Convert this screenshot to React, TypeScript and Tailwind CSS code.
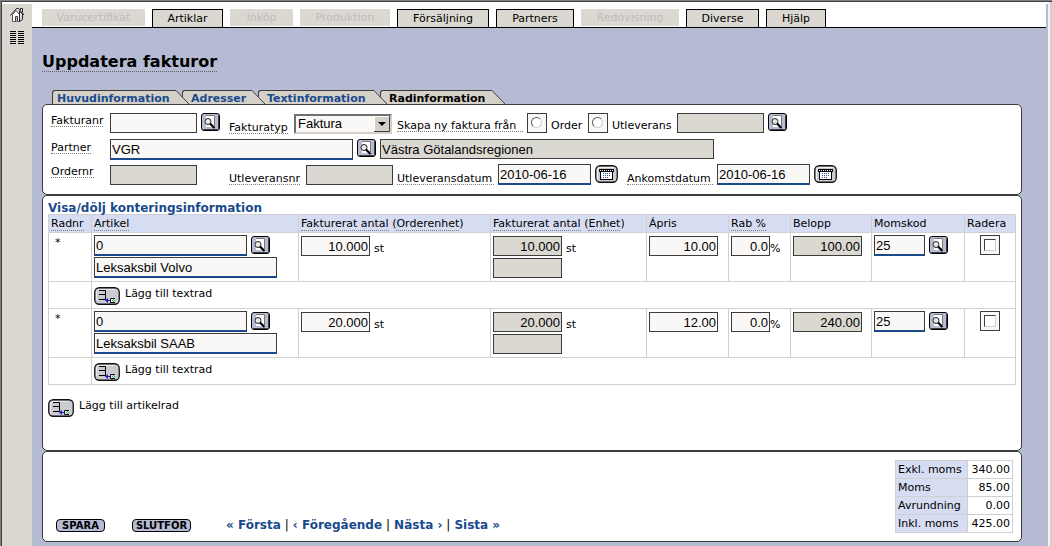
import type { ReactNode } from "react";

const menu = [
  { label: "Varucertifikat", disabled: true, width: "w-[103px]" },
  { label: "Artiklar", disabled: false, width: "w-[71px]" },
  { label: "Inköp", disabled: true, width: "w-[63px]" },
  { label: "Produktion", disabled: true, width: "w-[90px]" },
  { label: "Försäljning", disabled: false, width: "w-[92px]" },
  { label: "Partners", disabled: false, width: "w-[78px]" },
  { label: "Redovisning", disabled: true, width: "w-[98px]" },
  { label: "Diverse", disabled: false, width: "w-[73px]" },
  { label: "Hjälp", disabled: false, width: "w-[60px]" },
];

const tabs = [
  { label: "Huvudinformation", width: "w-[124px]", layer: "z-40" },
  { label: "Adresser", width: "w-[70px]", layer: "z-30" },
  { label: "Textinformation", width: "w-[116px]", layer: "z-20" },
  { label: "Radinformation", width: "w-[112px]", layer: "z-10" },
];

const rows = [
  { id: "1", name: "Leksaksbil Volvo", qty: "10.000", price: "10.00", sum: "100.00" },
  { id: "2", name: "Leksaksbil SAAB", qty: "20.000", price: "12.00", sum: "240.00" },
];

const totals = [
  ["Exkl. moms", "340.00"],
  ["Moms", "85.00"],
  ["Avrundning", "0.00"],
  ["Inkl. moms", "425.00"],
];

type FieldProps = {
  id: string;
  label?: string;
  value?: string;
  width: string;
  kind?: "plain" | "required" | "locked";
  right?: boolean;
};

function Field({ id, label, value = "", width, kind = "plain", right }: FieldProps) {
  const look = {
    plain: "h-5 border border-[#3c3c3c] bg-[#faf8f7]",
    required: "h-[21px] border border-b-2 border-[#3c3c3c] border-b-[#194a8c] bg-[#faf8f7]",
    locked: "h-5 border border-[#3c3c3c] bg-[#dbd8d1]",
  }[kind];
  return (
    <input
      id={id}
      type="text"
      aria-label={label}
      defaultValue={value}
      readOnly={kind === "locked"}
      className={`block shrink-0 px-px font-['Liberation_Sans',sans-serif] text-[13px] leading-4 outline-none ${look} ${width} ${right ? "text-right" : ""}`}
    />
  );
}

function Label({ htmlFor, children }: { htmlFor: string; children: ReactNode }) {
  return (
    <label
      htmlFor={htmlFor}
      className="block whitespace-nowrap border-b border-dotted border-[#808080] pt-0.5 leading-[11px]"
    >
      {children}
    </label>
  );
}

function Hint({ children }: { children: ReactNode }) {
  return <span className="inline-block border-b border-dotted border-[#808080] leading-[13px]">{children}</span>;
}

function SearchButton() {
  return (
    <button type="button" aria-label="Sök" className="block shrink-0">
      <svg width="19" height="18" viewBox="0 0 19 18">
        <rect x="0.5" y="0.5" width="18" height="17" rx="2.5" fill="#b7bcd3" stroke="#000" />
        <path d="M17.5 2.5v13q0 1-1 1H2.5" fill="none" stroke="#3a3c48" />
        <rect x="5" y="2" width="9" height="12" fill="#fff" />
        <path d="M5 2.5h8.5V13" fill="none" stroke="#777" />
        <circle cx="7" cy="8.5" r="3" fill="#e8e8e8" stroke="#222" />
        <path d="M9 10.5l4.5 4.5" stroke="#000" strokeWidth="2.2" />
      </svg>
    </button>
  );
}

function CalendarButton() {
  return (
    <button type="button" aria-label="Kalender" className="block shrink-0">
      <svg width="23" height="18" viewBox="0 0 23 18">
        <rect x="0.75" y="0.75" width="21.5" height="16.5" rx="4.5" fill="#cbcbd1" stroke="#111" strokeWidth="1.3" />
        <path d="M2.5 14V5q0-2.5 3-2.5h13" fill="none" stroke="#f4f4f4" />
        <rect x="5.5" y="6.5" width="12" height="8" fill="#fff" stroke="#000" />
        <rect x="4" y="4" width="15" height="3" fill="#000" />
        <path d="M5 5.5h13" stroke="#fff" strokeDasharray="1 1" />
        <path d="M8 8.5h8M8 10.5h8M8 12.5h6" stroke="#2c5fa8" strokeDasharray="1 1" />
      </svg>
    </button>
  );
}

function AddIcon() {
  return (
    <svg width="26" height="18" viewBox="0 0 26 18" className="block shrink-0">
      <rect x="0.75" y="0.75" width="24.5" height="16.5" rx="4.5" fill="#cbcbd1" stroke="#111" strokeWidth="1.3" />
      <path d="M2.5 13V5q0-2.5 3-2.5h15" fill="none" stroke="#ececf0" />
      <path d="M5 3.5h6.5v9H5M5 7.5h6" fill="none" stroke="#000" />
      <path d="M12 13.5h4" stroke="#1d1dc8" />
      <path d="M11 13.5l3-2.5v5z" fill="#1d1dc8" />
      <path d="M21 11.5h-4.5v4H21" fill="#e8f5e8" stroke="#111" />
      <path d="M18 13.5h3M19 12.5h2M19 14.5h2" stroke="#2fae45" strokeDasharray="1 1" />
    </svg>
  );
}

function AddButton({ children }: { children: ReactNode }) {
  return (
    <button type="button" className="flex items-start gap-[5px] pt-[3px] text-left">
      <AddIcon />
      <span className="leading-[14px]">{children}</span>
    </button>
  );
}

function RadioBox({ id }: { id: string }) {
  return (
    <span className="flex size-5 shrink-0 items-start justify-center border border-[#3c3c3c] bg-[#faf8f7] pr-px pt-[3px]">
      <input
        id={id}
        type="radio"
        name="source"
        className="size-[11px] appearance-none rounded-full border border-[#d4d0c8] border-l-[#606060] border-t-[#606060] bg-white checked:bg-black"
      />
    </span>
  );
}

function SideBar() {
  return (
    <aside className="flex w-[30px] shrink-0 flex-col items-center gap-[9px] bg-[#dbd8d1] pt-[3px]">
      <a href="#" aria-label="Hem">
        <svg width="15" height="15" viewBox="0 0 15 15" className="block">
          <path d="M2.5 7.5v7h7v-7l-3.5-4z" fill="#fff" stroke="#555" />
          <path d="M9.5 14.5l3-2V7l-3-3z" fill="#ddd" stroke="#222" />
          <path d="M10.5 3.5v-2h2v4" fill="#fff" stroke="#222" />
          <path d="M0.5 8.5l6-7h2l5.5 6.5" fill="none" stroke="#222" />
          <path d="M5.5 14.5v-5h2v5" fill="#bbb" stroke="#444" />
        </svg>
      </a>
      <a href="#" aria-label="Meny">
        <svg width="14" height="13" viewBox="0 0 14 13" className="block">
          <path
            d="M0 .5h6M8 .5h6M0 2.5h6M8 2.5h6M0 4.5h6M8 4.5h6M0 6.5h6M8 6.5h6M0 8.5h6M8 8.5h6M0 10.5h6M8 10.5h6M0 12.5h6M8 12.5h6"
            stroke="#000"
          />
        </svg>
      </a>
    </aside>
  );
}

function TopMenu() {
  return (
    <nav className="mr-0.5 flex h-6 items-start gap-[7px] border-b border-black bg-white pl-[10px] pt-[5px]">
      {menu.map((item) => (
        <button
          key={item.label}
          type="button"
          disabled={item.disabled}
          className={`shrink-0 text-center leading-4 ${item.width} ${
            item.disabled
              ? "h-[17px] bg-[#dbd8d1] text-[#bdbdbd]"
              : "h-[18px] border border-b-0 border-black bg-[#dbd8d1]"
          }`}
        >
          {item.label}
        </button>
      ))}
    </nav>
  );
}

function Tabs() {
  return (
    <div className="flex pl-[10px] font-bold">
      {tabs.map((tab, i) => (
        <div key={tab.label} className={`relative flex h-[14px] ${tab.layer} ${i > 0 ? "-ml-[7px]" : ""}`}>
          <a
            href="#"
            className={`whitespace-nowrap rounded-tl-[3px] border-l border-t border-[#3c3c3c] bg-[#d5d0c8] leading-[15px] ${tab.width} ${
              i === 0 ? "pl-1" : "pl-2"
            } ${i === 3 ? "text-black" : "text-[#194a8c]"}`}
          >
            {tab.label}
          </a>
          <svg width="13" height="14" viewBox="0 0 13 14" className="block">
            <path d="M0 0l13 14H0z" fill="#d5d0c8" />
            <path d="M0 .5l13 13.5" stroke="#3c3c3c" />
          </svg>
        </div>
      ))}
    </div>
  );
}

function InvoiceHead() {
  return (
    <section className="rounded-[5px] border border-[#3c3c3c] bg-white pb-[9px] pl-2 pt-2">
      <div className="grid grid-cols-[59px_119px_168px_1fr] gap-y-1">
        <div className="flex items-start">
          <Label htmlFor="invoice">Fakturanr</Label>
        </div>
        <div className="flex items-start gap-1">
          <Field id="invoice" width="w-[87px]" />
          <SearchButton />
        </div>
        <div className="flex items-end justify-between pr-[5px]">
          <Label htmlFor="type">Fakturatyp</Label>
          <div className="relative">
            <select
              id="type"
              className="block h-5 w-[98px] appearance-none border-2 border-[#d4d0c8] border-l-[#707070] border-t-[#707070] bg-[#faf8f7] pl-0.5 font-['Liberation_Sans',sans-serif] text-[13px] leading-4"
            >
              <option>Faktura</option>
            </select>
            <svg width="16" height="16" viewBox="0 0 16 16" className="pointer-events-none absolute right-0.5 top-0.5">
              <rect width="16" height="16" fill="#d4d0c8" />
              <path d="M.5 15V.5H15" fill="none" stroke="#fff" />
              <path d="M15.5 0v15.5H0" fill="none" stroke="#404040" />
              <path d="M4 6h8l-4 4z" fill="#000" />
            </svg>
          </div>
        </div>
        <div className="flex items-start gap-1">
          <div className="w-[126px] pt-[5px]">
            <Label htmlFor="order">Skapa ny faktura från</Label>
          </div>
          <RadioBox id="order" />
          <label htmlFor="order" className="w-[33px] pt-[5px] leading-4">
            Order
          </label>
          <RadioBox id="delivery" />
          <label htmlFor="delivery" className="w-[61px] pt-[5px] leading-4">
            Utleverans
          </label>
          <Field id="deliveryRef" label="Utleverans" width="w-[87px]" kind="locked" />
          <SearchButton />
        </div>

        <div className="flex items-start pt-0.5">
          <Label htmlFor="partner">Partner</Label>
        </div>
        <div className="col-span-3 flex items-start gap-1 pt-px">
          <Field id="partner" value="VGR" width="w-[243px]" kind="required" />
          <SearchButton />
          <Field id="partnerName" label="Partnernamn" value="Västra Götalandsregionen" width="w-[334px]" kind="locked" />
        </div>

        <div className="flex items-start">
          <Label htmlFor="orderNo">Ordernr</Label>
        </div>
        <div className="flex items-end">
          <Field id="orderNo" width="w-[87px]" kind="locked" />
        </div>
        <div className="flex items-end justify-between pr-1">
          <Label htmlFor="deliveryNo">Utleveransnr</Label>
          <Field id="deliveryNo" width="w-[87px]" kind="locked" />
        </div>
        <div className="flex items-end gap-1">
          <div className="w-[97px]">
            <Label htmlFor="deliveryDate">Utleveransdatum</Label>
          </div>
          <Field id="deliveryDate" value="2010-06-16" width="w-[93px]" kind="required" />
          <div className="pb-0.5">
            <CalendarButton />
          </div>
          <div className="ml-[5px] w-[86px]">
            <Label htmlFor="arrivalDate">Ankomstdatum</Label>
          </div>
          <Field id="arrivalDate" value="2010-06-16" width="w-[93px]" kind="required" />
          <div className="pb-0.5">
            <CalendarButton />
          </div>
        </div>
      </div>
    </section>
  );
}

const cell = "border border-[#d0d0d0] px-0.5 align-top";

function InvoiceRow({ row }: { row: (typeof rows)[number] }) {
  return (
    <>
      <tr className="h-[49px]">
        <td className={`${cell} pt-0.5`}>
          <span className="pl-1">*</span>
        </td>
        <td className={`${cell} pt-0.5`}>
          <div className="flex gap-1">
            <Field id={`article${row.id}`} label="Artikel" value="0" width="w-[153px]" kind="required" />
            <div className="pt-px">
              <SearchButton />
            </div>
          </div>
          <div className="pt-px">
            <Field id={`name${row.id}`} label="Benämning" value={row.name} width="w-[183px]" kind="required" />
          </div>
        </td>
        <td className={`${cell} pt-[3px]`}>
          <div className="flex items-end gap-1">
            <Field id={`qty${row.id}`} label="Antal" value={row.qty} width="w-[69px]" right />
            <span className="leading-[14px]">st</span>
          </div>
        </td>
        <td className={`${cell} pt-[3px]`}>
          <div className="flex items-end gap-1">
            <Field id={`unit${row.id}`} label="Antal enhet" value={row.qty} width="w-[69px]" kind="locked" right />
            <span className="leading-[14px]">st</span>
          </div>
          <div className="pt-0.5">
            <Field id={`extra${row.id}`} label="Enhet" width="w-[69px]" kind="locked" />
          </div>
        </td>
        <td className={`${cell} pt-[3px]`}>
          <Field id={`price${row.id}`} label="Ápris" value={row.price} width="w-[69px]" right />
        </td>
        <td className={`${cell} pt-[3px]`}>
          <div className="flex items-end">
            <Field id={`discount${row.id}`} label="Rab %" value="0.0" width="w-[39px]" right />
            <span className="leading-[14px]">%</span>
          </div>
        </td>
        <td className={`${cell} pt-[3px]`}>
          <Field id={`sum${row.id}`} label="Belopp" value={row.sum} width="w-[69px]" kind="locked" right />
        </td>
        <td className={`${cell} pt-0.5`}>
          <div className="flex gap-1">
            <Field id={`vat${row.id}`} label="Momskod" value="25" width="w-[51px]" kind="required" />
            <div className="pt-px">
              <SearchButton />
            </div>
          </div>
        </td>
        <td className={`${cell} pt-0.5`}>
          <div className="mx-auto flex size-5 items-start justify-center border border-[#3c3c3c] bg-[#faf8f7] pt-[3px]">
            <input
              type="checkbox"
              aria-label="Radera"
              className="size-3 appearance-none border border-[#d4d0c8] border-l-[#404040] border-t-[#404040] bg-white checked:bg-black"
            />
          </div>
        </td>
      </tr>
      <tr className="h-[27px]">
        <td className={cell}></td>
        <td colSpan={8} className={`${cell} pt-0.5`}>
          <AddButton>Lägg till textrad</AddButton>
        </td>
      </tr>
    </>
  );
}

function InvoiceLines() {
  return (
    <section className="rounded-[5px] border border-[#3c3c3c] bg-white px-[5px] pb-[33px] pt-[6px]">
      <a href="#" className="block text-[12px] font-bold leading-3 text-[#194a8c]">
        Visa/dölj konteringsinformation
      </a>
      <table className="w-full table-fixed border-collapse">
        <colgroup>
          <col className="w-[43px]" />
          <col />
          <col className="w-[192px]" />
          <col className="w-[156px]" />
          <col className="w-[82px]" />
          <col className="w-[62px]" />
          <col className="w-[81px]" />
          <col className="w-[93px]" />
          <col className="w-[51px]" />
        </colgroup>
        <thead>
          <tr className="h-[18px] whitespace-nowrap bg-[#d6dcf2] text-left [&>th]:border [&>th]:border-[#d0d0d0] [&>th]:px-0.5 [&>th]:pt-px [&>th]:font-normal [&>th]:leading-[14px]">
            <th><Hint>Radnr</Hint></th>
            <th><Hint>Artikel</Hint></th>
            <th><Hint>Fakturerat antal</Hint> (<Hint>Orderenhet</Hint>)</th>
            <th><Hint>Fakturerat antal</Hint> (<Hint>Enhet</Hint>)</th>
            <th>Ápris</th>
            <th><Hint>Rab %</Hint></th>
            <th>Belopp</th>
            <th>Momskod</th>
            <th>Radera</th>
          </tr>
        </thead>
        <tbody>
          {rows.map((row) => (
            <InvoiceRow key={row.id} row={row} />
          ))}
        </tbody>
      </table>
      <div className="pt-[11px]">
        <AddButton>Lägg till artikelrad</AddButton>
      </div>
    </section>
  );
}

function Footer() {
  const button =
    "h-[13px] rounded-[4px] border border-black bg-[#b7bcd3] text-[10px] font-bold leading-[11px]";
  return (
    <footer className="flex items-end justify-between rounded-[5px] border border-[#3c3c3c] bg-white pb-2 pl-[13px] pr-2 pt-2">
      <div className="flex items-center">
        <button type="button" className={`w-[49px] ${button}`}>
          SPARA
        </button>
        <button type="button" className={`ml-[27px] w-[59px] ${button}`}>
          SLUTFÖR
        </button>
        <nav className="flex gap-1 pl-[35px] text-[12px] [&>a]:font-bold [&>a]:text-[#194a8c]">
          <a href="#">« Första</a>
          <span>|</span>
          <a href="#">‹ Föregående</a>
          <span>|</span>
          <a href="#">Nästa ›</a>
          <span>|</span>
          <a href="#">Sista »</a>
        </nav>
      </div>
      <table className="border-collapse">
        <tbody>
          {totals.map(([name, amount]) => (
            <tr key={name} className="h-[18px] leading-4">
              <th className="w-[72px] whitespace-nowrap border border-[#d0d0d0] bg-[#d6dcf2] px-0.5 text-left font-normal">
                {name}
              </th>
              <td className="w-[45px] border border-[#d0d0d0] px-0.5 text-right">{amount}</td>
            </tr>
          ))}
        </tbody>
      </table>
    </footer>
  );
}

export default function App() {
  return (
    <div className="min-h-screen border-l border-t border-[#808080] bg-white font-['DejaVu_Sans',Verdana,sans-serif] text-[11px] leading-4 text-black">
      <div className="flex min-h-[calc(100vh-1px)] border-l border-t border-[#404040] pt-0.5">
        <SideBar />
        <main className="min-w-0 flex-1 bg-[#b5bbd2]">
          <TopMenu />
          <div className="pb-1 pl-[10px] pr-[26px] pt-[24px]">
            <h1 className="mb-[18px] w-fit border-b border-dotted border-[#606060] text-[16px] font-bold leading-[19px]">
              Uppdatera fakturor
            </h1>
            <Tabs />
            <InvoiceHead />
            <InvoiceLines />
            <Footer />
          </div>
        </main>
        <div className="-mt-0.5 w-1 shrink-0 border-l-2 border-[#f4f2ee] bg-[#d4d0c8]" />
      </div>
    </div>
  );
}
